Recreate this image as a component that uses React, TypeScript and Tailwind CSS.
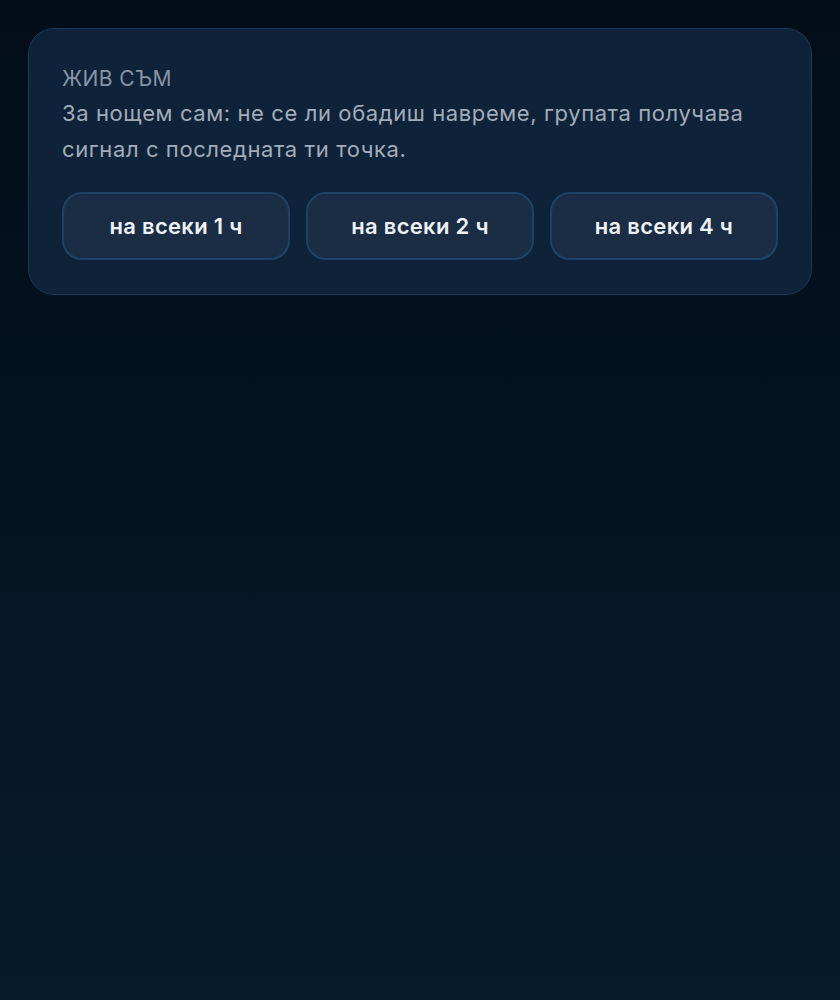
import React from "react";

const OPTIONS = [1, 2, 4];

export default function App() {
  return (
    <div
      lang="bg"
      className="min-h-[1000px] bg-gradient-to-b from-[#020d18] to-[#071b2d] p-7 font-['Inter','Noto_Sans',sans-serif]"
    >
      <div className="rounded-[26px] border border-[#1a3858] bg-[#0e2239] px-[33px] pt-[36px] pb-[34px]">
        <div className="text-[21px] leading-[28px] tracking-[0.4px] text-[#8795a5]">ЖИВ СЪМ</div>
        <p className="mt-[2px] text-[22px] leading-[36px] tracking-[0.6px] text-[#a3adb9]">
          За нощем сам: не се ли обадиш навреме, групата получава сигнал с последната ти точка.
        </p>
        <div className="mt-[25px] grid grid-cols-3 gap-4">
          {OPTIONS.map((h) => (
            <button
              key={h}
              className="h-[68px] rounded-[20px] border-2 border-[#1e4366] bg-[#1a2d44] text-[22px] font-semibold tracking-[0.3px] text-[#eef2f6]"
            >
              на всеки {h} ч
            </button>
          ))}
        </div>
      </div>
    </div>
  );
}
